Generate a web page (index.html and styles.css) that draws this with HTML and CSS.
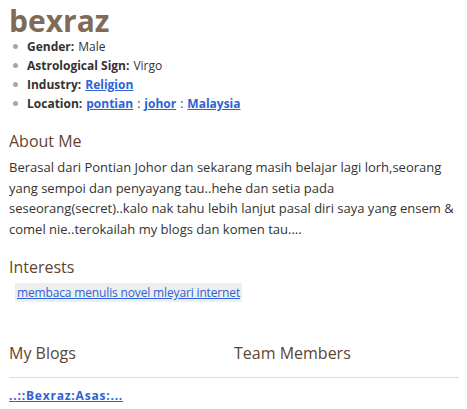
FILE: index.html
```html
<!DOCTYPE html>
<html lang="en">
<head>
    <meta charset="UTF-8">
    <title>Blogger: Profil Pengguna: bexraz</title>
    <link rel="stylesheet" href="styles.css">
</head>
<body>
<main class="profile">
    <h1 class="profile-name">bexraz</h1>
    <ul class="profile-facts">
        <li><strong>Gender:</strong> Male</li>
        <li><strong>Astrological Sign:</strong> Virgo</li>
        <li><strong>Industry:</strong> <a href="#" class="bold-link">Religion</a></li>
        <li><strong>Location:</strong> <a href="#" class="bold-link">pontian</a> : <a href="#" class="bold-link">johor</a> : <a href="#" class="bold-link">Malaysia</a></li>
    </ul>

    <section>
        <h2>About Me</h2>
        <p class="about">Berasal dari Pontian Johor dan sekarang masih belajar lagi lorh,seorang yang sempoi dan penyayang tau..hehe dan setia pada seseorang(secret)..kalo nak tahu lebih lanjut pasal diri saya yang ensem &amp; comel nie..terokailah my blogs dan komen tau....</p>
    </section>

    <section>
        <h2>Interests</h2>
        <p class="interests"><a href="#">membaca menulis novel mleyari internet</a></p>
    </section>

    <section class="columns">
        <h2>My Blogs</h2>
        <h2>Team Members</h2>
        <div class="col-body">
            <a href="#" class="bold-link blog-link">..::Bexraz:Asas:...</a>
        </div>
    </section>
</main>
</body>
</html>
```

FILE: styles.css
```css
* {
    margin: 0;
    padding: 0;
    box-sizing: border-box;
}
body {
    font-family: 'Open Sans', 'Liberation Sans', Arial, sans-serif;
    font-size: 13px;
    color: #333;
    background: #fff;
}
a {
    color: #2d63d6;
}
.bold-link {
    font-weight: bold;
}
.profile {
    width: 459px;
    padding-left: 9px;
}
.profile-name {
    font-size: 30px;
    line-height: 32px;
    color: #7f6b57;
    margin-top: 5px;
}
.profile-facts {
    list-style: none;
    padding-left: 4px;
    font-size: 12px;
    line-height: 19px;
}
.profile-facts li {
    display: flex;
    align-items: center;
    gap: 0 4px;
}
.profile-facts li::before {
    content: "";
    width: 5px;
    height: 5px;
    border-radius: 50%;
    background: #b5a48e;
    margin-right: 5px;
}
h2 {
    font-size: 16px;
    font-weight: normal;
    color: #5e4532;
    line-height: 20px;
}
section h2 {
    margin-top: 18px;
    margin-bottom: 6px;
}
.about {
    line-height: 20.6px;
}
.interests {
    display: inline-block;
    margin-left: 6px;
    padding: 0 2px;
    background: #eee;
    font-size: 12px;
    line-height: 19px;
    letter-spacing: -0.15px;
}
.columns {
    display: grid;
    grid-template-columns: 225px 225px;
    margin-top: 41px;
}
.columns h2 {
    margin: 0;
    padding-bottom: 14px;
    border-bottom: 1px solid #ddd;
}
.col-body {
    padding-top: 9px;
    font-size: 12px;
}
.blog-link {
    letter-spacing: 0.8px;
}
```
